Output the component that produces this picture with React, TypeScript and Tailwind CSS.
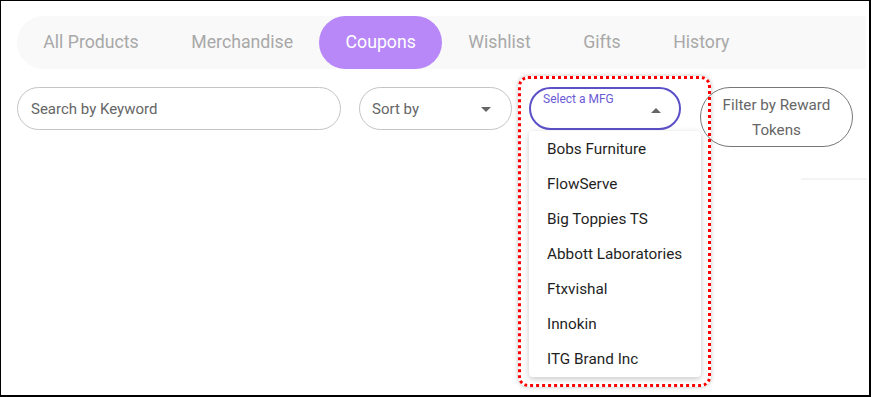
import { useState } from 'react';

const tabs = ['All Products', 'Merchandise', 'Coupons', 'Wishlist', 'Gifts', 'History'];

const manufacturers = [
    'Bobs Furniture',
    'FlowServe',
    'Big Toppies TS',
    'Abbott Laboratories',
    'Ftxvishal',
    'Innokin',
    'ITG Brand Inc',
];

function Caret({ up = false }: { up?: boolean }) {
    return (
        <svg width="10" height="5" viewBox="0 0 10 5" className="fill-[#666]">
            {up ? <path d="M0 5 L5 0 L10 5 Z" /> : <path d="M0 0 L5 5 L10 0 Z" />}
        </svg>
    );
}

export default function App() {
    const [active] = useState('Coupons');

    return (
        <div
            className="relative w-[871px] h-[397px] overflow-hidden bg-white border-black border-l border-t border-r-2 border-b-2"
            style={{ fontFamily: 'Roboto, "Liberation Sans", sans-serif' }}
        >
            <div className="pt-[15px] pl-[16px] pr-[3px]">
                <div className="flex h-[53px] items-center rounded-l-full bg-[#f9f9f9]">
                    {tabs.map((tab) => (
                        <div
                            key={tab}
                            className={`flex h-full items-center rounded-full px-[26.25px] pb-[1px] text-[17.7px] ${
                                tab === active ? 'bg-[#b888f8] text-white' : 'text-[#a8a8a8]'
                            }`}
                        >
                            {tab}
                        </div>
                    ))}
                </div>
            </div>

            <div className="flex items-start pl-[16px] pt-[18px]">
                <div className="flex h-[43px] w-[324px] items-center rounded-full border border-[#c4c4c4] px-[13px] pt-[1px] text-[15px] text-[#666]">
                    Search by Keyword
                </div>

                <div className="ml-[18px] flex h-[43px] w-[153px] items-center justify-between rounded-full border border-[#c4c4c4] pl-[12px] pr-[20px] pt-[1px] text-[15px] text-[#666]">
                    <span>Sort by</span>
                    <Caret />
                </div>

                <div className="relative ml-[17px] w-[152px]">
                    <div className="flex h-[43px] w-full items-center justify-end rounded-full border-2 border-[#5b50c8] pr-[18px]">
                        <span className="absolute left-[14px] top-[3px] text-[12px] text-[#6b5ad6]">Select a MFG</span>
                        <div className="mt-[4px]">
                            <Caret up />
                        </div>
                    </div>

                    <div className="absolute left-0 top-[44px] z-10 w-[172px] rounded-[4px] bg-white pt-[1px] shadow-[0_2px_6px_rgba(0,0,0,0.22)]">
                        {manufacturers.map((name) => (
                            <div key={name} className="flex h-[35px] items-center pl-[18px] text-[15.3px] text-[#1f1f1f]">
                                {name}
                            </div>
                        ))}
                    </div>

                    <div className="pointer-events-none absolute left-[-11px] top-[-11px] z-20 h-[311px] w-[193px] rounded-[10px] border-[3px] border-dotted border-[#ff0000] shadow-[0_0_4px_rgba(0,0,0,0.25)]" />
                </div>

                <div className="ml-[19px] flex h-[60px] w-[153px] flex-col items-center justify-center rounded-full border border-[#777] pt-[2px] text-[15.2px] leading-[25px] text-[#666]">
                    <span>Filter by Reward</span>
                    <span>Tokens</span>
                </div>
            </div>

            <div className="ml-auto mr-[2px] mt-[31px] h-[2px] w-[66px] bg-[#f4f4f4]" />
        </div>
    );
}
